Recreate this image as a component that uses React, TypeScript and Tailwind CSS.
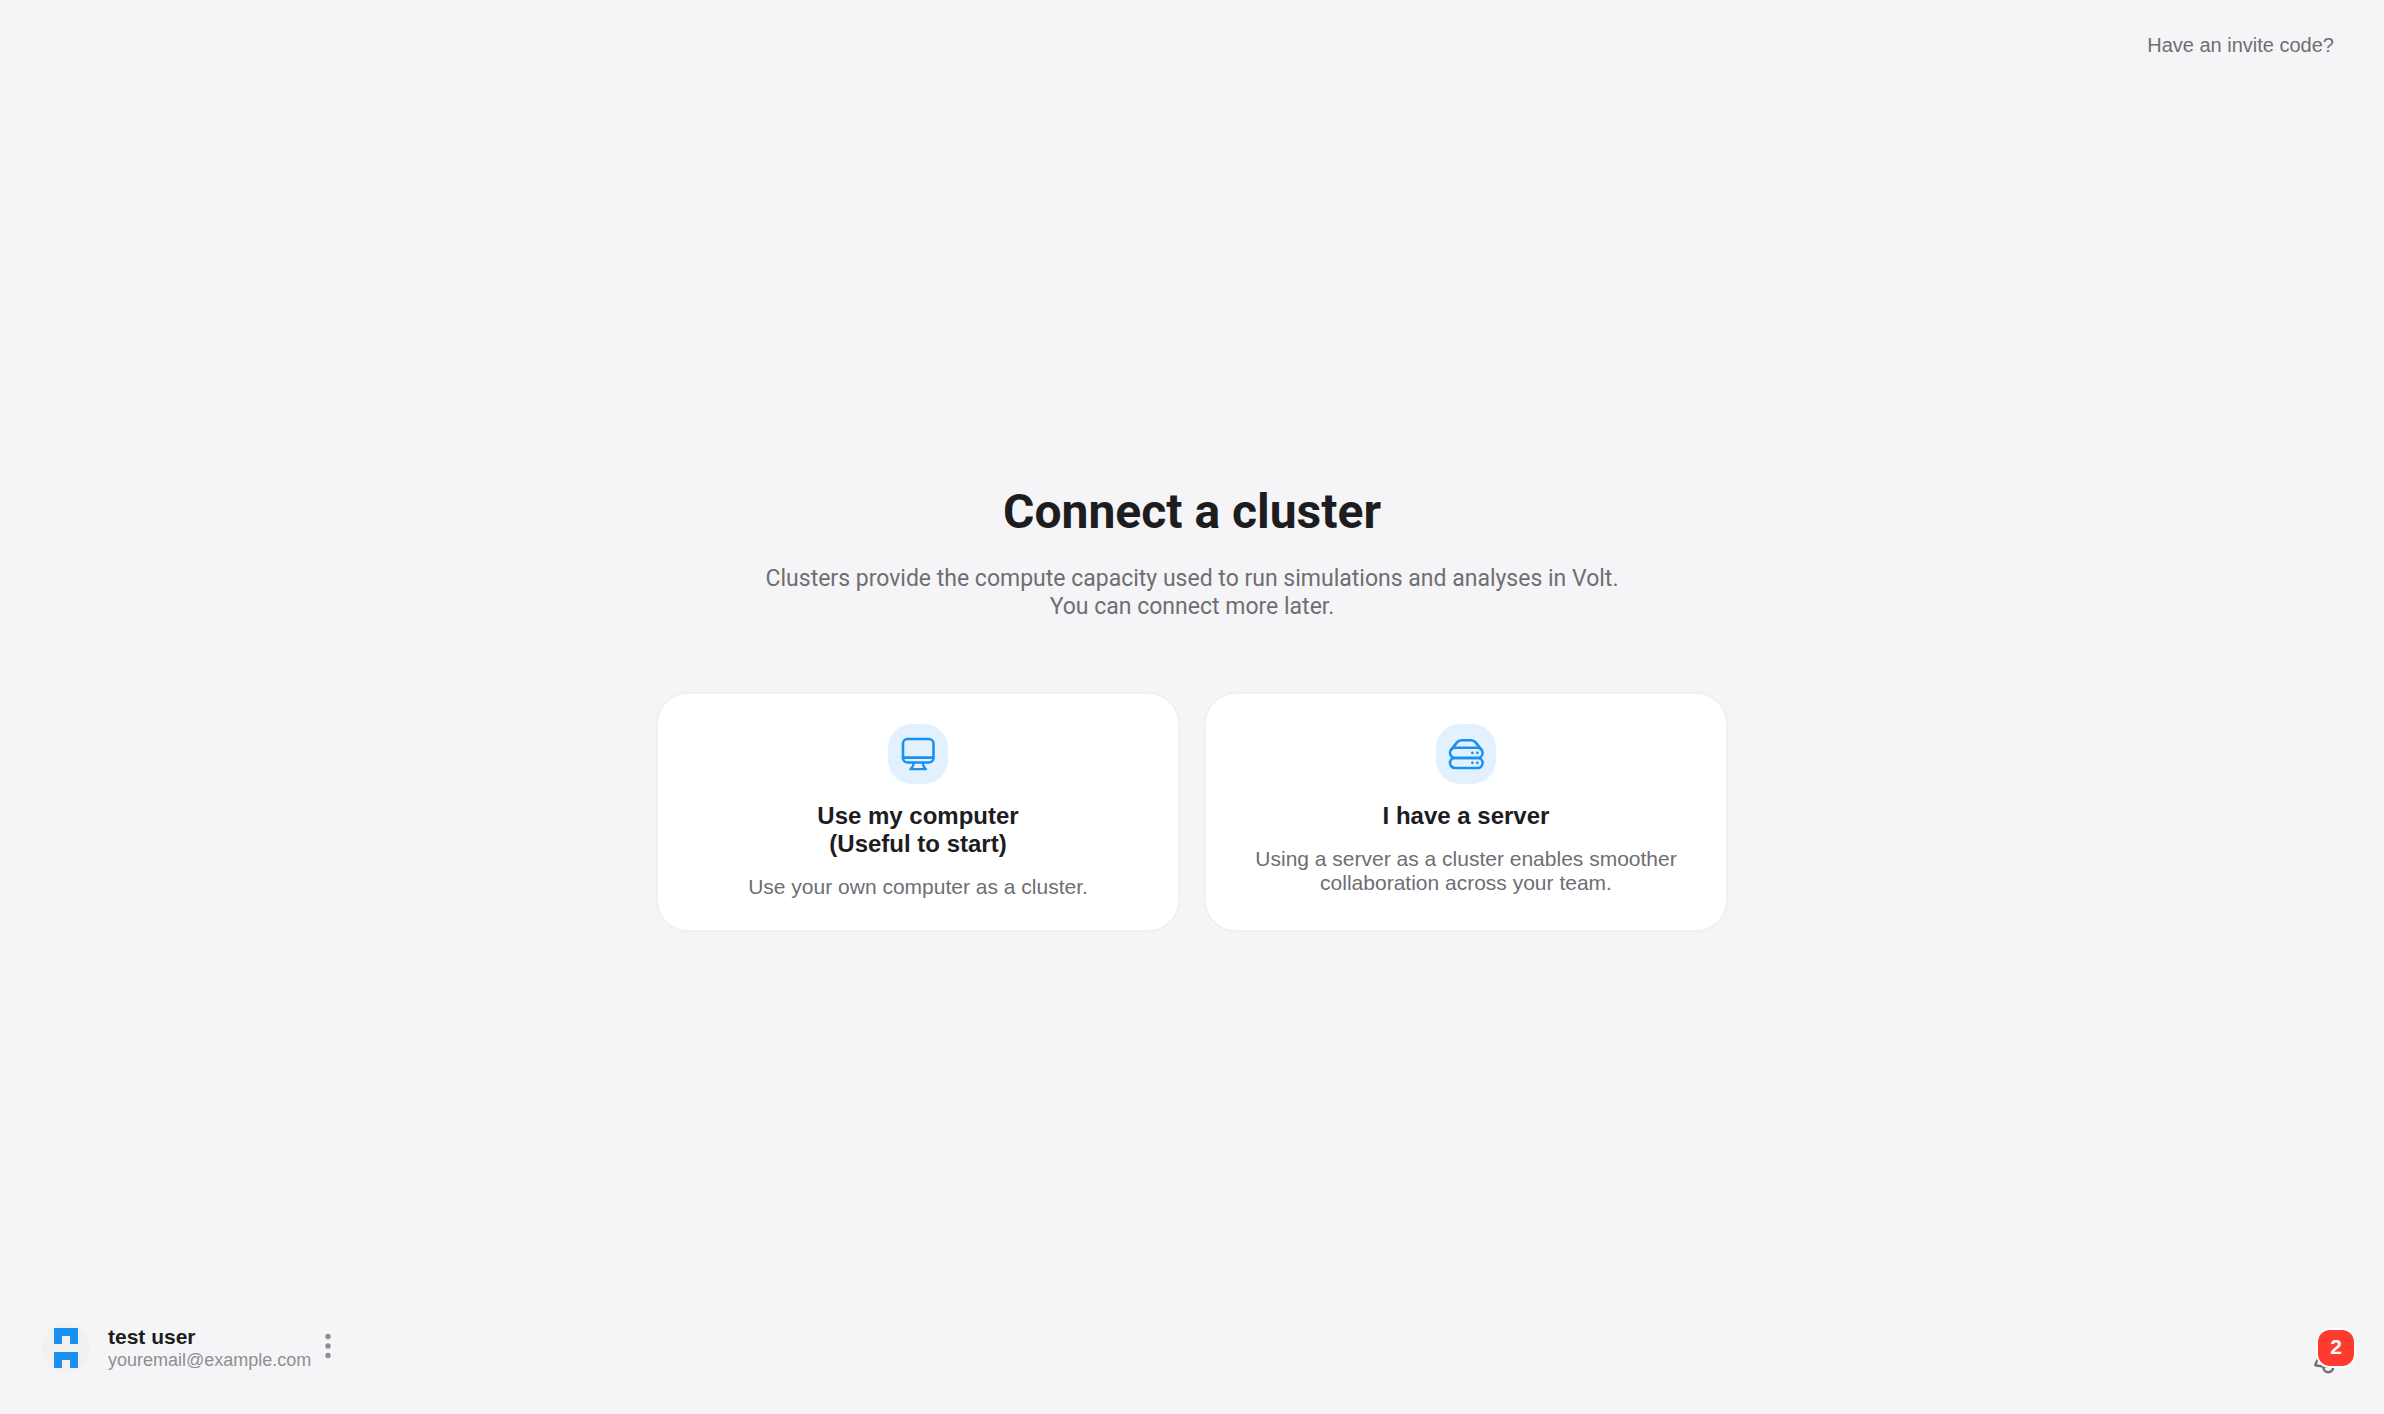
import React from "react";

const ComputerIcon = () => (
    <svg width="36" height="36" viewBox="0 0 36 36" fill="none" stroke="currentColor" strokeWidth="2.6" strokeLinejoin="round" strokeLinecap="round" aria-hidden="true">
        <rect x="3" y="3" width="30.5" height="23.5" rx="4.5" />
        <line x1="3" y1="21.6" x2="33.5" y2="21.6" />
        <path d="M13.6 26.8c0 2.6-1 4.6-3.2 6.4h15.6c-2.2-1.8-3.2-3.8-3.2-6.4" strokeWidth="2.2" />
    </svg>
);

const ServerIcon = () => (
    <svg width="36" height="36" viewBox="0 0 36 36" fill="none" stroke="currentColor" strokeWidth="2.6" strokeLinejoin="round" strokeLinecap="round" aria-hidden="true">
        <path d="M3.3 13.6 9 6.4a6 6 0 0 1 4.6-2.2h9.4a6 6 0 0 1 4.6 2.2l5.7 7.2" />
        <rect x="2" y="11.8" width="32.6" height="10.2" rx="5" />
        <rect x="2" y="22" width="32.6" height="10" rx="5" />
        <g fill="currentColor" stroke="none">
            <circle cx="24.4" cy="16.8" r="1.4" />
            <circle cx="29.4" cy="16.8" r="1.4" />
            <circle cx="24.4" cy="26.8" r="1.4" />
            <circle cx="29.4" cy="26.8" r="1.4" />
        </g>
    </svg>
);

const options = [
    {
        id: "computer",
        icon: <ComputerIcon />,
        title: ["Use my computer", "(Useful to start)"],
        description: "Use your own computer as a cluster.",
    },
    {
        id: "server",
        icon: <ServerIcon />,
        title: ["I have a server"],
        description: "Using a server as a cluster enables smoother collaboration across your team.",
    },
];

const UserMenu = () => (
    <div className="flex items-center">
        <svg width="48" height="48" viewBox="0 0 48 48" className="shrink-0" aria-hidden="true">
            <circle cx="24" cy="24" r="24" fill="#f0f0f0" />
            <path d="M12 4h24v16h-8v-8h-8v8h-8zM12 28h24v16h-8v-8h-8v8h-8z" fill="#1a91f0" />
        </svg>
        <div className="ml-[18px]">
            <p className="text-[21px] leading-6 font-bold text-[#1d1d1f]">test user</p>
            <p className="text-[18px] leading-[22px] text-[#8e8e93]">youremail@example.com</p>
        </div>
        <button type="button" aria-label="Account menu" className="ml-3 cursor-pointer pb-1 text-[#8e8e93]">
            <svg width="10" height="26" viewBox="0 0 10 26" fill="currentColor">
                <circle cx="5" cy="3.5" r="2.7" />
                <circle cx="5" cy="13" r="2.7" />
                <circle cx="5" cy="22.5" r="2.7" />
            </svg>
        </button>
    </div>
);

const Notifications = () => (
    <button type="button" aria-label="2 notifications" className="relative cursor-pointer text-[#6e6e73]">
        <svg width="32" height="44" viewBox="0 0 32 44" fill="none" stroke="currentColor" strokeWidth="2.4" strokeLinejoin="round" strokeLinecap="round" className="overflow-visible">
            <path d="M16 12a9 9 0 0 0-9 9v7c0 3-3.7 6.5-3.7 9.2l8 1.4h10.4l7-1.4C28.7 34.5 25 31 25 28v-7a9 9 0 0 0-9-9z" />
            <path d="M11.5 39.5a4.8 4.8 0 0 0 9.6 0" />
        </svg>
        <span className="absolute top-0 left-1 flex size-10 items-center justify-center rounded-[14px] border-2 border-white bg-[#ff3b30] pb-0.5 text-[21px] leading-6 font-bold text-white">
            2
        </span>
    </button>
);

const App = () => {
    return (
        <div className="grid min-h-screen grid-rows-[1fr_auto_1fr] bg-[#f5f5f7] font-['Liberation_Sans',sans-serif]">
            <header className="flex items-start justify-end px-[50px] pt-[33px]">
                <button type="button" className="cursor-pointer text-[20px] leading-6 text-[#6e6e73]">
                    Have an invite code?
                </button>
            </header>

            <main className="mx-auto w-full max-w-[1072px] pt-0.5 text-center">
                <div className="font-[Roboto,sans-serif]">
                    <h1 className="text-[48px] leading-14 font-bold text-[#1d1d1f]">Connect a cluster</h1>
                    <p className="mt-[25px] text-[23px] leading-7 text-[#6e6e73]">
                        Clusters provide the compute capacity used to run simulations and analyses in Volt.
                        <br />
                        You can connect more later.
                    </p>
                </div>

                <div className="mt-[71px] grid grid-cols-2 gap-6">
                    {options.map((option) => (
                        <button
                            key={option.id}
                            type="button"
                            className="flex cursor-pointer flex-col items-center rounded-[32px] border-2 border-[#f0f0f0] bg-white px-10 pt-[30px] pb-[31px]"
                        >
                            <span className="flex size-[60px] items-center justify-center rounded-3xl bg-[#e3f1ff] text-[#1a91f0]">
                                {option.icon}
                            </span>
                            <span className="mt-[18px] text-[24px] leading-7 font-bold text-[#1d1d1f]">
                                {option.title.map((line) => (
                                    <span key={line} className="block">{line}</span>
                                ))}
                            </span>
                            <span className="mt-[17px] text-[21px] leading-6 text-[#6e6e73]">{option.description}</span>
                        </button>
                    ))}
                </div>
            </main>

            <footer className="flex items-end justify-between pr-10 pb-[42px] pl-[42px]">
                <UserMenu />
                <Notifications />
            </footer>
        </div>
    );
};

export default App;
